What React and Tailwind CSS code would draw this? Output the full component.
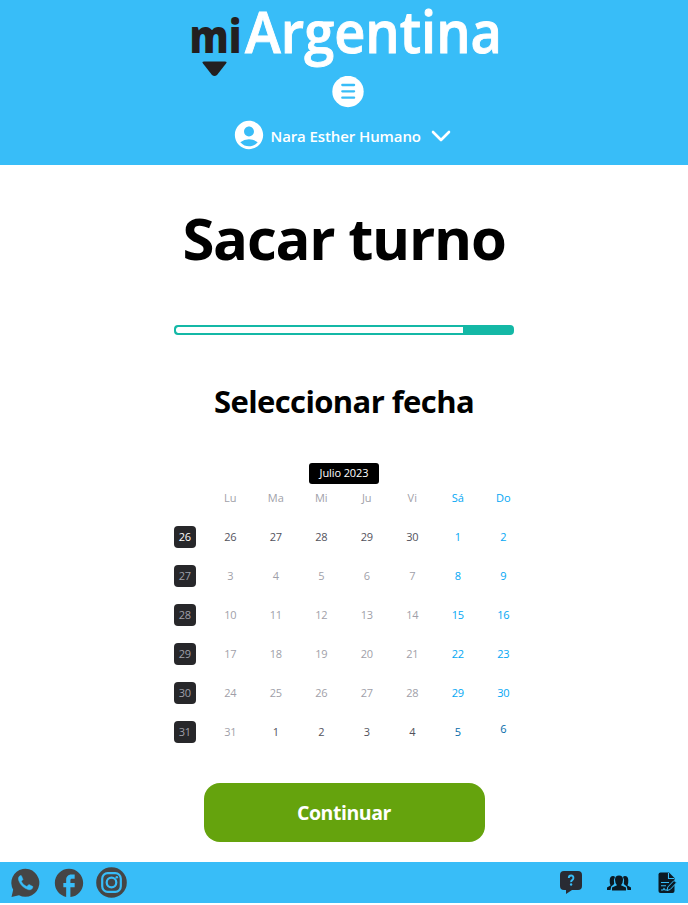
import { MdAccountCircle, MdFacebook } from "react-icons/md";

const WEEKS = [
  ["26", "26", "27", "28", "29", "30", "1", "2"],
  ["27", "3", "4", "5", "6", "7", "8", "9"],
  ["28", "10", "11", "12", "13", "14", "15", "16"],
  ["29", "17", "18", "19", "20", "21", "22", "23"],
  ["30", "24", "25", "26", "27", "28", "29", "30"],
  ["31", "31", "1", "2", "3", "4", "5", "6"],
];

function dayColor(row, col) {
  if (col >= 6) return row === 5 ? "text-sky-700" : "text-sky-500";
  const adjacent = (row === 0 && col < 6) || (row === 5 && col > 1);
  return adjacent ? "text-zinc-600" : "text-zinc-400";
}

function Logo() {
  return (
    <svg width="312" height="76" viewBox="0 0 312 76" className="ml-[2px] block overflow-visible">
      <text x="0.500" y="52.5" fontSize="46" fontWeight="800" fill="#231f20" textLength="52" lengthAdjust="spacingAndGlyphs">mi</text>
      <text x="56" y="52.5" fontSize="57.5" fontWeight="600" fill="#fff" stroke="#fff" strokeWidth="0.9" textLength="257" lengthAdjust="spacingAndGlyphs">Argentina</text>
      <path d="M15 61.5h21q2.500 0 1 2L28 75q-2.500 2-5 0L14 63.500q-1.500-2 1-2z" fill="#231f20" />
    </svg>
  );
}

function Header() {
  return (
    <header className="flex h-[165px] flex-col items-center bg-[#38bdf8]">
      <Logo />
      <svg width="32" height="32" viewBox="0 0 32 32" className="ml-2 block">
        <circle cx="16" cy="15.5" r="15.7" fill="#fff" />
        <path d="M10.300 9h11.800M10.300 15.3h11.800M10.300 21.700h11.800" stroke="#38bdf8" strokeWidth="2.3" strokeLinecap="round" />
      </svg>
      <div className="mt-[10px] mr-[6px] flex items-center">
        <MdAccountCircle size={34} color="#fff" />
        <span className="mt-[2px] ml-[5px] w-[152px] text-[15px] font-semibold tracking-[-0.1px] whitespace-nowrap text-white">Nara Esther Humano</span>
        <svg width="20" height="14" viewBox="0 0 20 14" className="mt-[2px] ml-2">
          <path d="M2 3l8 8 8-8" fill="none" stroke="#fff" strokeWidth="2.600" strokeLinecap="round" strokeLinejoin="round" />
        </svg>
      </div>
    </header>
  );
}

export default function App() {
  return (
    <div className="h-[905px] overflow-hidden bg-white font-['Open_Sans','Noto_Sans',sans-serif] text-black">
      <Header />
      <main className="flex h-[697px] flex-col items-center">
        <h1 className="mt-[37px] h-[74px] text-[58px] leading-[72px] font-bold tracking-[-1.25px] whitespace-nowrap">Sacar turno</h1>
        <div className="mt-[49px] flex h-[10px] w-[340px] overflow-hidden rounded-[4px] border-2 border-[#14b8a6] bg-[#14b8a6]">
          <div className="w-[287px] rounded-l-[2px] bg-white" />
        </div>
        <h2 className="mt-[46px] h-10 text-[31px] leading-10 font-bold tracking-[-0.6px] whitespace-nowrap">Seleccionar fecha</h2>
        <div className="mt-[42px] flex h-[21px] w-[70px] items-center justify-center rounded-[3px] bg-black text-[11px] font-medium tracking-[-0.1px] whitespace-nowrap text-white">Julio 2023</div>
        <div className="mt-1 grid w-[364px] grid-cols-8 text-center text-[11px] leading-5 text-zinc-400">
          <span />
          {["Lu", "Ma", "Mi", "Ju", "Vi", "Sá", "Do"].map((d, i) => (
            <span key={d} className={i > 4 ? "text-sky-500" : ""}>{d}</span>
          ))}
        </div>
        <div className="mt-[9px] grid w-[364px] grid-cols-8 text-[11px] tracking-[-0.3px]">
          {WEEKS.flatMap((week, r) =>
            week.map((d, c) => (
              <div key={`${r}-${c}`} className="flex h-[39px] items-center justify-center">
                {c === 0 ? (
                  <span className={`flex size-[22px] items-center justify-center rounded bg-zinc-800 pt-[2px] ${r === 0 ? "text-white" : "text-zinc-400"}`}>{d}</span>
                ) : (
                  <span className={`pt-[2px] ${dayColor(r, c)} ${r === 5 && c === 7 ? "mb-[6px]" : ""}`}>{d}</span>
                )}
              </div>
            ))
          )}
        </div>
        <button className="mt-8 h-[59px] w-[281px] shrink-0 rounded-2xl bg-[#65a30d] text-[19.5px] font-bold tracking-[-0.45px] text-white">Continuar</button>
      </main>
      <footer className="flex h-[41px] items-center justify-between bg-[#38bdf8] pr-[10px] pl-[10px]">
        <div className="flex items-center">
          <svg width="30" height="30" viewBox="0 0 30 30">
            <path d="M1.5 29L3.2 21.8A14 14 0 1 1 9 27.3z" fill="#454545" />
            <path d="M10.500 7.500c-2 .8-2.500 3-1.700 5.200 1.600 4.400 5.200 7.600 9.400 8.900 2.600.7 4.600-.5 4.700-3l-4-2.200-2 2.100c-2.600-1-4.400-2.800-5.600-5.200l1.700-1.900-1.600-3.700z" fill="#38bdf8" stroke="#38bdf8" strokeWidth="0.5" strokeLinejoin="round" />
          </svg>
          <MdFacebook size={34} color="#454545" className="ml-[12px]" />
          <svg width="32" height="32" viewBox="0 0 32 32" className="ml-[10px]">
            <circle cx="15.500" cy="15.500" r="15.300" fill="#454545" />
            <g fill="none" stroke="#38bdf8" strokeWidth="2.200">
              <rect x="6.200" y="6.200" width="18.600" height="18.600" rx="5.500" />
              <circle cx="15.500" cy="15.500" r="4.800" />
            </g>
            <circle cx="20.800" cy="10.300" r="1.300" fill="#38bdf8" />
          </svg>
        </div>
        <div className="flex items-center">
          <svg width="22" height="24" viewBox="0 0 22 24" className="mr-[-1px] ml-[-1px]">
            <path d="M4 0h14q4 0 4 4v11q0 4-4 4h-6l-6 4v-4H4q-4 0-4-4V4q0-4 4-4z" fill="#292b33" />
            <path d="M8.800 7q0-2.500 2.300-2.500T13.400 7q0 1.300-1.200 2.100t-1.100 2" fill="none" stroke="#38bdf8" strokeWidth="1.900" />
            <circle cx="11.100" cy="13.500" r="1.200" fill="#38bdf8" />
          </svg>
          <svg width="24" height="16" viewBox="0 0 24 16" className="ml-[26px]" fill="#0b1a24">
            <path d="M0 15v-2.500l3.500-2Q2.500 8.500 2.700 5 3 1 6 1q1.500 0 2 1-2 3-.8 7l-3 2.500L3.500 15zM24 15v-2.500l-3.500-2q1-2 .8-5.500-.3-4-3.300-4-1.500 0-2 1 2 3 .8 7l3 2.500.7 3.500z" />
            <path d="M5 15.500v-3l5-2.300Q8 8 8 4.700 8 .5 12 .5t4 4.200q0 3.300-2 5.500l5 2.300v3z" />
          </svg>
          <svg width="20" height="22" viewBox="0 0 20 22" className="ml-[27px]">
            <path d="M2.500.5h8.500l5.500 5.500v13q0 2-2 2h-12q-2 0-2-2v-16.500q0-2 2-2z" fill="#0b1a24" />
            <path d="M10.500 1v5.500H16M3 10.500h8M3 13.700h5M3 18h2l1-1.500 1 1.500h3" fill="none" stroke="#38bdf8" strokeWidth="1.100" />
            <path d="M9 18.500l.8-3.500 6.200-6.500 2.500 2.300-6.300 6.700z" fill="#0b1a24" stroke="#38bdf8" strokeWidth="1" />
          </svg>
        </div>
      </footer>
    </div>
  );
}
